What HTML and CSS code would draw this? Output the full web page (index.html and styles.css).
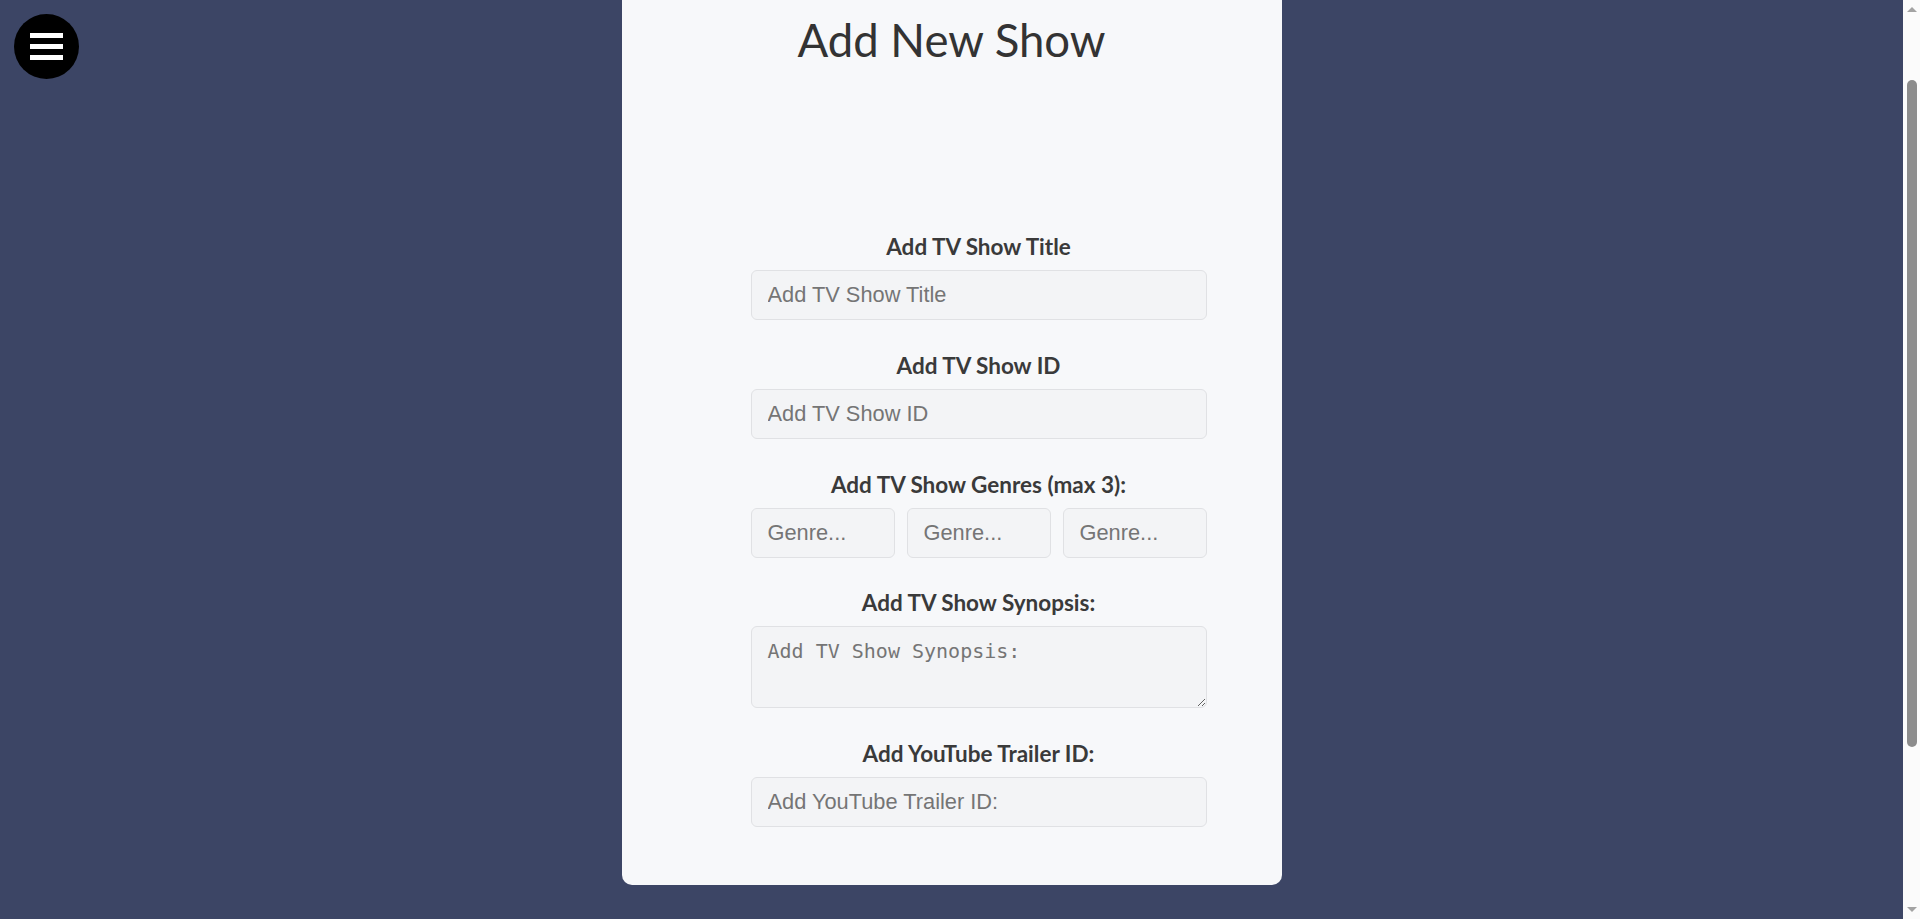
FILE: index.html
```html
<!DOCTYPE html>
<html lang="en">
<head>
    <meta charset="UTF-8">
    <meta name="viewport" content="width=device-width, initial-scale=1.0">
    <title>Add New Show</title>
    <link rel="stylesheet" href="styles.css">
</head>
<body>
    <button class="menu-button" aria-label="Menu">
        <span></span>
        <span></span>
        <span></span>
    </button>

    <div class="page">
        <div class="container">
            <h1>Add New Show</h1>

            <form class="show-form">
                <div class="form-group">
                    <label for="title">Add TV Show Title</label>
                    <input type="text" id="title" placeholder="Add TV Show Title">
                </div>
                <div class="form-group">
                    <label for="showId">Add TV Show ID</label>
                    <input type="text" id="showId" placeholder="Add TV Show ID">
                </div>
                <div class="form-group">
                    <label for="genre1">Add TV Show Genres (max 3):</label>
                    <div class="genre-row">
                        <input type="text" id="genre1" placeholder="Genre...">
                        <input type="text" id="genre2" placeholder="Genre...">
                        <input type="text" id="genre3" placeholder="Genre...">
                    </div>
                </div>
                <div class="form-group">
                    <label for="synopsis">Add TV Show Synopsis:</label>
                    <textarea id="synopsis" placeholder="Add TV Show Synopsis:"></textarea>
                </div>
                <div class="form-group">
                    <label for="trailer">Add YouTube Trailer ID:</label>
                    <input type="text" id="trailer" placeholder="Add YouTube Trailer ID:">
                </div>
            </form>
        </div>
    </div>

    <!-- barra de desplazamiento de la ventana -->
    <div class="scrollbar">
        <span class="arrow up"></span>
        <span class="thumb"></span>
        <span class="arrow down"></span>
    </div>
</body>
</html>
```

FILE: styles.css
```css
body {
    margin: 0;
    background-color: #3c4565;
    font-family: Lato, "Open Sans", sans-serif;
    color: #333;
}

.menu-button {
    position: fixed;
    top: 14px;
    left: 14px;
    width: 65px;
    height: 65px;
    border: none;
    border-radius: 50%;
    background-color: #000;
    display: flex;
    flex-direction: column;
    justify-content: center;
    align-items: center;
    gap: 6px;
    padding: 0;
    cursor: pointer;
}

.menu-button span {
    display: block;
    width: 33px;
    height: 5px;
    background-color: #fff;
}

.page {
    display: flex;
    justify-content: center;
    padding-right: 17px;
    padding-bottom: 300px;
}

.container {
    width: 660px;
    background-color: #f7f8fa;
    border-radius: 0 0 10px 10px;
    padding-bottom: 58px;
}

h1 {
    margin: 0;
    padding-top: 13px;
    font-size: 45.5px;
    line-height: 54px;
    font-weight: 400;
    text-align: center;
    color: #333;
}

.show-form {
    width: 456px;
    margin: 165px 0 0 129px;
}

.form-group {
    margin-bottom: 30.8px;
}

.form-group:last-child {
    margin-bottom: 0;
}

.form-group label {
    display: block;
    text-align: center;
    font-size: 22.5px;
    line-height: 30px;
    font-weight: 700;
    color: #3a3a3a;
    margin-bottom: 8px;
}

.form-group input,
.form-group textarea {
    display: block;
    width: 100%;
    box-sizing: border-box;
    padding: 12px 16px;
    border: 1px solid #e0e1e4;
    border-radius: 6px;
    background-color: #f3f4f6;
    color: #333;
}

.form-group input {
    height: 50px;
    font-family: "Liberation Sans", Arial, sans-serif;
    font-size: 21.8px;
}

.form-group textarea {
    height: 82px;
    font-family: "DejaVu Sans Mono", monospace;
    font-size: 20px;
}

.form-group input::placeholder,
.form-group textarea::placeholder {
    color: #757575;
}

.genre-row {
    display: flex;
    gap: 12px;
}

.genre-row input {
    flex: 1;
    min-width: 0;
}

.scrollbar {
    position: fixed;
    top: 0;
    right: 0;
    bottom: 0;
    width: 17px;
    background-color: #fbfbfb;
    display: flex;
    flex-direction: column;
    align-items: center;
    padding: 7px 0;
    box-sizing: border-box;
}

.scrollbar .arrow {
    width: 0;
    height: 0;
    border-left: 5px solid transparent;
    border-right: 5px solid transparent;
}

.scrollbar .up {
    border-bottom: 5px solid #a3a3a3;
}

.scrollbar .down {
    margin-top: auto;
    border-top: 5px solid #a3a3a3;
}

.scrollbar .thumb {
    width: 10px;
    height: 667px;
    margin-top: 68px;
    margin-left: 1px;
    border-radius: 5px;
    background-color: #8c8c8c;
}
```
